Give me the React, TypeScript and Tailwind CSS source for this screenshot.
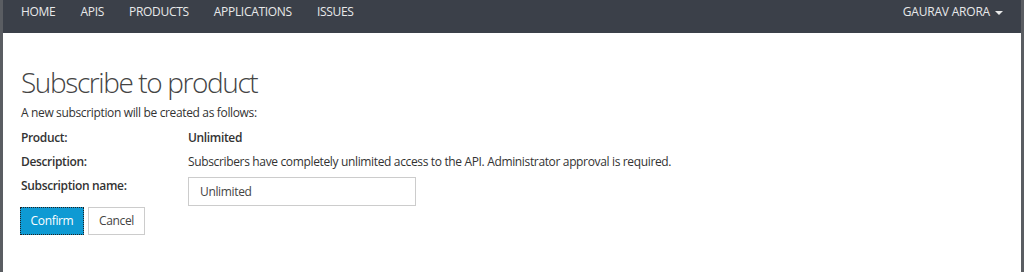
const navItems = ['HOME', 'APIS', 'PRODUCTS', 'APPLICATIONS', 'ISSUES']

export default function App() {
  return (
    <div
      className="flex h-[272px] w-[1024px] flex-col border-x-[3px] border-[#5a5d62] bg-white text-[#333]"
      style={{ fontFamily: '"Open Sans", "Noto Sans", sans-serif' }}
    >
      {/* Top bar */}
      <header className="flex h-[33px] items-start justify-between bg-[#3b4049] pl-[18px] pr-[18px] text-[12px] text-[#e8e9ea]">
        <nav className="flex gap-[25px] pt-[3px]">
          {navItems.map((item) => (
            <a key={item} className="tracking-[-0.3px]">
              {item}
            </a>
          ))}
        </nav>
        <div className="flex items-center gap-[5px] pt-[3px] tracking-[-0.2px]">
          <span>GAURAV ARORA</span>
          <span className="mt-[1px] h-0 w-0 border-x-[4px] border-t-[4px] border-x-transparent border-t-[#e8e9ea]" />
        </div>
      </header>

      {/* Content */}
      <main className="px-[18px] pt-[33px] tracking-[-0.35px]">
        <h1 className="text-[28px] font-light leading-[32px] tracking-[-1.4px] text-[#444]">Subscribe to product</h1>
        <p className="mt-[7px] text-[12px] leading-[16px]">A new subscription will be created as follows:</p>

        <div className="mt-[9px] grid grid-cols-[167px_1fr] gap-y-[8px] text-[12px] leading-[16px]">
          <span className="font-semibold">Product:</span>
          <span className="font-semibold">Unlimited</span>
          <span className="font-semibold">Description:</span>
          <span>Subscribers have completely unlimited access to the API. Administrator approval is required.</span>
          <span className="font-semibold">Subscription name:</span>
          <input
            defaultValue="Unlimited"
            className="-mt-[1px] h-[29px] w-[228px] border border-[#ccc] px-[11px] text-[12px] tracking-[-0.35px] text-[#444] outline-none"
          />
        </div>

        <div className="-ml-[1px] mt-[1px] flex gap-[4px] text-[12px]">
          <button className="h-[28px] w-[64px] border border-dotted border-[#222] bg-[#0e9ad3] text-white">Confirm</button>
          <button className="h-[28px] w-[57px] border border-[#ccc] bg-white text-[#444]">Cancel</button>
        </div>
      </main>
    </div>
  )
}
